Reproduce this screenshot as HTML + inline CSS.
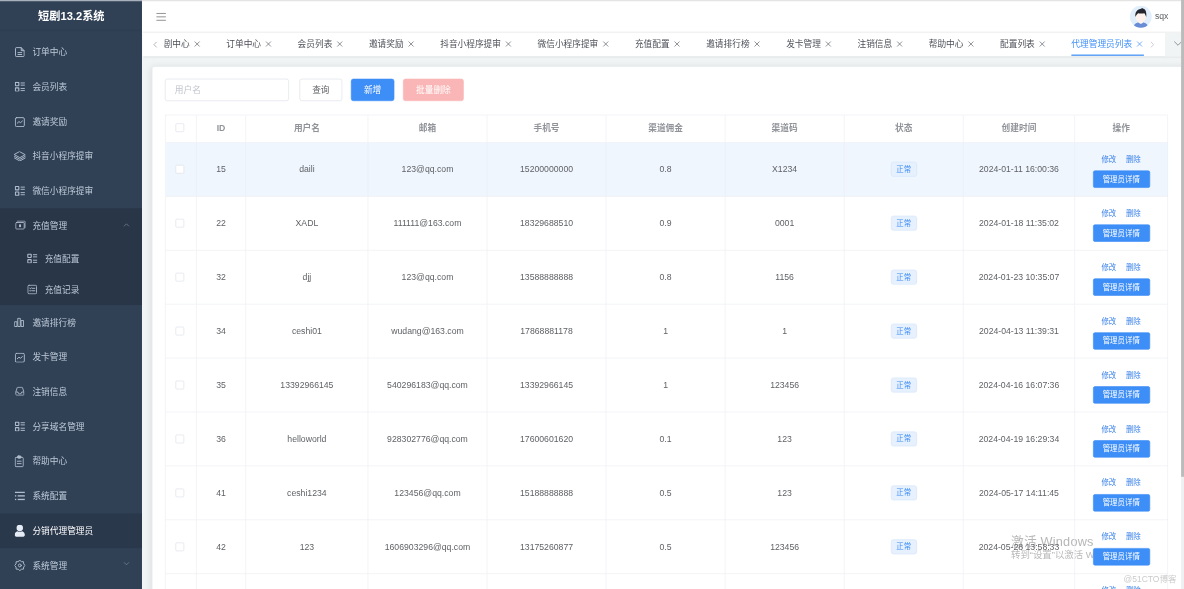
<!DOCTYPE html><html lang="zh-CN"><head><meta charset="utf-8"><title>短剧13.2系统</title><style>
*{box-sizing:border-box;margin:0;padding:0}
html,body{width:1184px;height:589px;overflow:hidden;background:#f1f4f5}
body{font-family:"Liberation Sans","Noto Sans CJK SC",sans-serif;font-size:14px;color:#606266;position:relative}
#root{position:absolute;left:0;top:0;width:1930px;height:970px;transform:scale(0.62);transform-origin:0 0;overflow:hidden;background:#f1f4f5;filter:blur(0.5px)}
.abs{position:absolute}
#side{position:absolute;left:0;top:0;overflow:hidden;width:229.3px;height:970px;background:#304156}
#title{position:absolute;left:0;top:1.5px;width:230px;height:50px;line-height:50px;text-align:center;color:#fff;font-size:18px;font-weight:bold;white-space:nowrap}
.mi{position:absolute;left:0;width:230px;height:56px;color:#bfcbd9;font-size:14px;white-space:nowrap}
.mi.sub{height:50px}
.mi .ic{position:absolute;top:50%;transform:translate(-50%,-50%);display:block;line-height:0;color:#b1bdcd}
.mi .tx{position:absolute;top:-1px;height:100%;display:flex;align-items:center}
.mi.act{background:#2a384c;color:#fff}
.mi.act .ic{color:#e6ecf5}
.arrow{position:absolute;left:198px;top:50%;width:12px;height:12px;transform:translateY(-50%);color:#7d8b9e}
#dark{position:absolute;left:0;top:336px;width:230px;height:156px;background:#293648}
#hdr{position:absolute;left:230px;top:0;width:1700px;height:52.800px;background:#fff;border-bottom:2.500px solid #f0f0f0}
#tabs{position:absolute;left:230px;top:52px;width:1700px;height:39px;background:#fff;box-shadow:0 1px 3px rgba(0,0,0,.14)}
#tabclip{position:absolute;left:35px;top:0;width:1582px;height:39px;overflow:hidden}
#tabrow{position:absolute;right:2px;top:0;height:39px;display:flex;white-space:nowrap}
.tab{height:37.7px;line-height:37.7px;padding:0 20px;font-size:14px;color:#4b4f57;display:flex;align-items:center;position:relative}
.tab:last-child{padding-right:0}
.tab .x{display:inline-block;width:14px;height:14px;margin-left:5px;position:relative;top:0px}
.tab.on{color:#3e8ef7}
.tab.on:after{content:"";position:absolute;left:20px;right:0;bottom:-0.5px;height:2px;background:#3e8ef7}
#more{position:absolute;left:1649px;top:0;width:41px;height:39px;background:#f1f4f5}
#card{position:absolute;left:245px;top:106.5px;width:1680px;height:900px;background:#fff;border:1px solid #ebeef5;border-radius:4px;box-shadow:0 2px 12px 0 rgba(0,0,0,.1)}
.inp{position:absolute;left:266px;top:127px;width:200px;height:36px;border:1px solid #dcdfe6;border-radius:4px;background:#fff;color:#c0c4cc;font-size:14px;line-height:34px;padding-left:15px}
.btn{position:absolute;top:127px;height:36px;border-radius:4px;font-size:14px;line-height:34px;text-align:center;border:1px solid #dcdfe6;background:#fff;color:#606266;white-space:nowrap}
.btn.pri{background:#3e8ef7;border-color:#3e8ef7;color:#fff}
.btn.dan{background:#fab6b6;border-color:#fab6b6;color:#fff}
#tbl{position:absolute;left:266px;top:185px;width:1618px;border-left:1px solid #ecedf1;border-top:1px solid #ecedf1}
.tr{display:flex;position:relative}
.tr.h{height:44px}
.tr.b{height:87px}
.tr.hi{background:#eff6fe}
.td{height:100%;border-right:1px solid #ecedf1;border-bottom:1px solid #ecedf1;display:flex;align-items:center;justify-content:center;font-size:14px;color:#606266;white-space:nowrap;position:relative;flex:none}
.tr.h .td{color:#909399;font-weight:bold;padding-bottom:4px}
.tr.h .cb{margin-top:-8.200px}
.cb{position:absolute;left:16px;top:50%;margin-top:-7px;width:14px;height:14px;border:1px solid #dcdfe6;border-radius:2px;background:#fff}
.tag{display:block;width:42px;height:24px;line-height:22px;font-size:12px;color:#3e8ef7;background:#e7f1fd;border:1px solid #d3e5fb;border-radius:4px;text-align:center}
.lk{position:absolute;top:15px;height:24px;line-height:24px;font-size:12px;color:#3a82e8}
.mb{position:absolute;left:28.5px;top:45px;width:92px;height:28px;line-height:27.5px;border:1px solid #3e8ef7;background:#3e8ef7;color:#fff;font-size:12px;border-radius:3px;text-align:center}
#sb{position:absolute;left:1905px;top:0;width:26px;height:970px;background:#eef0f2}
#sbt{position:absolute;left:0;top:-5px;width:26px;height:774px;background:#bbb}
#topline{position:absolute;left:0;top:-3px;width:1930px;height:5px;background:linear-gradient(to right,#a8b0bc 0,#a8b0bc 229.3px,#e4e4e4 229.3px)}
.wm1{position:absolute;left:1630.6px;top:860px;font-size:20.5px;line-height:26px;color:#b6b6b6;white-space:nowrap;letter-spacing:.35px}
.wm2{position:absolute;left:1630.6px;top:884.5px;font-size:15.2px;line-height:20px;color:#b9b9b9;white-space:nowrap}
.wm3{position:absolute;left:1812px;top:923px;font-size:14px;line-height:18px;color:#cfcfcf;white-space:nowrap}
</style></head><body><div id="root">
<div class="abs" style="left:228px;top:0;width:4px;height:91px;background:#fff"></div>
<div id="card"></div>
<div class="inp">用户名</div>
<div class="btn" style="left:483px;width:69px">查询</div>
<div class="btn pri" style="left:566px;width:70px">新增</div>
<div class="btn dan" style="left:650px;width:98px">批量删除</div>
<div class="wm1">激活 Windows</div><div class="wm2">转到“设置”以激活 Windows。</div>
<div id="tbl">
<div class="tr h">
<div class="td" style="width:50px"><span class="cb"></span></div>
<div class="td" style="width:80px;padding-bottom:2.500px">ID</div>
<div class="td" style="width:197px">用户名</div>
<div class="td" style="width:192px">邮箱</div>
<div class="td" style="width:192px">手机号</div>
<div class="td" style="width:192px">渠道佣金</div>
<div class="td" style="width:192px">渠道码</div>
<div class="td" style="width:192px">状态</div>
<div class="td" style="width:180px">创建时间</div>
<div class="td" style="width:150px">操作</div>
</div>
<div class="tr b hi">
<div class="td" style="width:50px"><span class="cb"></span></div>
<div class="td" style="width:80px">15</div>
<div class="td" style="width:197px">daili</div>
<div class="td" style="width:192px">123@qq.com</div>
<div class="td" style="width:192px">15200000000</div>
<div class="td" style="width:192px">0.8</div>
<div class="td" style="width:192px">X1234</div>
<div class="td" style="width:192px"><span class="tag">正常</span></div>
<div class="td" style="width:180px">2024-01-11 16:00:36</div>
<div class="td" style="width:150px"><span class="lk" style="left:42.5px">修改</span><span class="lk" style="left:82px">删除</span><span class="mb">管理员详情</span></div>
</div>
<div class="tr b">
<div class="td" style="width:50px"><span class="cb"></span></div>
<div class="td" style="width:80px">22</div>
<div class="td" style="width:197px">XADL</div>
<div class="td" style="width:192px">111111@163.com</div>
<div class="td" style="width:192px">18329688510</div>
<div class="td" style="width:192px">0.9</div>
<div class="td" style="width:192px">0001</div>
<div class="td" style="width:192px"><span class="tag">正常</span></div>
<div class="td" style="width:180px">2024-01-18 11:35:02</div>
<div class="td" style="width:150px"><span class="lk" style="left:42.5px">修改</span><span class="lk" style="left:82px">删除</span><span class="mb">管理员详情</span></div>
</div>
<div class="tr b">
<div class="td" style="width:50px"><span class="cb"></span></div>
<div class="td" style="width:80px">32</div>
<div class="td" style="width:197px">djj</div>
<div class="td" style="width:192px">123@qq.com</div>
<div class="td" style="width:192px">13588888888</div>
<div class="td" style="width:192px">0.8</div>
<div class="td" style="width:192px">1156</div>
<div class="td" style="width:192px"><span class="tag">正常</span></div>
<div class="td" style="width:180px">2024-01-23 10:35:07</div>
<div class="td" style="width:150px"><span class="lk" style="left:42.5px">修改</span><span class="lk" style="left:82px">删除</span><span class="mb">管理员详情</span></div>
</div>
<div class="tr b">
<div class="td" style="width:50px"><span class="cb"></span></div>
<div class="td" style="width:80px">34</div>
<div class="td" style="width:197px">ceshi01</div>
<div class="td" style="width:192px">wudang@163.com</div>
<div class="td" style="width:192px">17868881178</div>
<div class="td" style="width:192px">1</div>
<div class="td" style="width:192px">1</div>
<div class="td" style="width:192px"><span class="tag">正常</span></div>
<div class="td" style="width:180px">2024-04-13 11:39:31</div>
<div class="td" style="width:150px"><span class="lk" style="left:42.5px">修改</span><span class="lk" style="left:82px">删除</span><span class="mb">管理员详情</span></div>
</div>
<div class="tr b">
<div class="td" style="width:50px"><span class="cb"></span></div>
<div class="td" style="width:80px">35</div>
<div class="td" style="width:197px">13392966145</div>
<div class="td" style="width:192px">540296183@qq.com</div>
<div class="td" style="width:192px">13392966145</div>
<div class="td" style="width:192px">1</div>
<div class="td" style="width:192px">123456</div>
<div class="td" style="width:192px"><span class="tag">正常</span></div>
<div class="td" style="width:180px">2024-04-16 16:07:36</div>
<div class="td" style="width:150px"><span class="lk" style="left:42.5px">修改</span><span class="lk" style="left:82px">删除</span><span class="mb">管理员详情</span></div>
</div>
<div class="tr b">
<div class="td" style="width:50px"><span class="cb"></span></div>
<div class="td" style="width:80px">36</div>
<div class="td" style="width:197px">helloworld</div>
<div class="td" style="width:192px">928302776@qq.com</div>
<div class="td" style="width:192px">17600601620</div>
<div class="td" style="width:192px">0.1</div>
<div class="td" style="width:192px">123</div>
<div class="td" style="width:192px"><span class="tag">正常</span></div>
<div class="td" style="width:180px">2024-04-19 16:29:34</div>
<div class="td" style="width:150px"><span class="lk" style="left:42.5px">修改</span><span class="lk" style="left:82px">删除</span><span class="mb">管理员详情</span></div>
</div>
<div class="tr b">
<div class="td" style="width:50px"><span class="cb"></span></div>
<div class="td" style="width:80px">41</div>
<div class="td" style="width:197px">ceshi1234</div>
<div class="td" style="width:192px">123456@qq.com</div>
<div class="td" style="width:192px">15188888888</div>
<div class="td" style="width:192px">0.5</div>
<div class="td" style="width:192px">123</div>
<div class="td" style="width:192px"><span class="tag">正常</span></div>
<div class="td" style="width:180px">2024-05-17 14:11:45</div>
<div class="td" style="width:150px"><span class="lk" style="left:42.5px">修改</span><span class="lk" style="left:82px">删除</span><span class="mb">管理员详情</span></div>
</div>
<div class="tr b">
<div class="td" style="width:50px"><span class="cb"></span></div>
<div class="td" style="width:80px">42</div>
<div class="td" style="width:197px">123</div>
<div class="td" style="width:192px">1606903296@qq.com</div>
<div class="td" style="width:192px">13175260877</div>
<div class="td" style="width:192px">0.5</div>
<div class="td" style="width:192px">123456</div>
<div class="td" style="width:192px"><span class="tag">正常</span></div>
<div class="td" style="width:180px">2024-05-28 13:58:33</div>
<div class="td" style="width:150px"><span class="lk" style="left:42.5px">修改</span><span class="lk" style="left:82px">删除</span><span class="mb">管理员详情</span></div>
</div>
<div class="tr b">
<div class="td" style="width:50px"><span class="cb"></span></div>
<div class="td" style="width:80px"></div>
<div class="td" style="width:197px"></div>
<div class="td" style="width:192px"></div>
<div class="td" style="width:192px"></div>
<div class="td" style="width:192px"></div>
<div class="td" style="width:192px"></div>
<div class="td" style="width:192px"><span class="tag">正常</span></div>
<div class="td" style="width:180px"></div>
<div class="td" style="width:150px"><span class="lk" style="left:42.5px">修改</span><span class="lk" style="left:82px">删除</span><span class="mb">管理员详情</span></div>
</div>
</div>
<div id="tabs"><svg class="abs" style="left:15px;top:14px" width="12" height="12" viewBox="0 0 12 12" fill="none" stroke="#909399" stroke-width="1.1"><path d="M7.600 1.600L3.400 6l4.200 4.400"/></svg>
<div id="tabclip"><div id="tabrow">
<div class="tab"><span>短剧中心</span><svg class="x" viewBox="0 0 14 14" fill="none" stroke="#5a5e66" stroke-width="1.1"><path d="M3 3l8 8M11 3l-8 8"/></svg></div>
<div class="tab"><span>订单中心</span><svg class="x" viewBox="0 0 14 14" fill="none" stroke="#5a5e66" stroke-width="1.1"><path d="M3 3l8 8M11 3l-8 8"/></svg></div>
<div class="tab"><span>会员列表</span><svg class="x" viewBox="0 0 14 14" fill="none" stroke="#5a5e66" stroke-width="1.1"><path d="M3 3l8 8M11 3l-8 8"/></svg></div>
<div class="tab"><span>邀请奖励</span><svg class="x" viewBox="0 0 14 14" fill="none" stroke="#5a5e66" stroke-width="1.1"><path d="M3 3l8 8M11 3l-8 8"/></svg></div>
<div class="tab"><span>抖音小程序提审</span><svg class="x" viewBox="0 0 14 14" fill="none" stroke="#5a5e66" stroke-width="1.1"><path d="M3 3l8 8M11 3l-8 8"/></svg></div>
<div class="tab"><span>微信小程序提审</span><svg class="x" viewBox="0 0 14 14" fill="none" stroke="#5a5e66" stroke-width="1.1"><path d="M3 3l8 8M11 3l-8 8"/></svg></div>
<div class="tab"><span>充值配置</span><svg class="x" viewBox="0 0 14 14" fill="none" stroke="#5a5e66" stroke-width="1.1"><path d="M3 3l8 8M11 3l-8 8"/></svg></div>
<div class="tab"><span>邀请排行榜</span><svg class="x" viewBox="0 0 14 14" fill="none" stroke="#5a5e66" stroke-width="1.1"><path d="M3 3l8 8M11 3l-8 8"/></svg></div>
<div class="tab"><span>发卡管理</span><svg class="x" viewBox="0 0 14 14" fill="none" stroke="#5a5e66" stroke-width="1.1"><path d="M3 3l8 8M11 3l-8 8"/></svg></div>
<div class="tab"><span>注销信息</span><svg class="x" viewBox="0 0 14 14" fill="none" stroke="#5a5e66" stroke-width="1.1"><path d="M3 3l8 8M11 3l-8 8"/></svg></div>
<div class="tab"><span>帮助中心</span><svg class="x" viewBox="0 0 14 14" fill="none" stroke="#5a5e66" stroke-width="1.1"><path d="M3 3l8 8M11 3l-8 8"/></svg></div>
<div class="tab"><span>配置列表</span><svg class="x" viewBox="0 0 14 14" fill="none" stroke="#5a5e66" stroke-width="1.1"><path d="M3 3l8 8M11 3l-8 8"/></svg></div>
<div class="tab on"><span>代理管理员列表</span><svg class="x" viewBox="0 0 14 14" fill="none" stroke="#3e8ef7" stroke-width="1.1"><path d="M3 3l8 8M11 3l-8 8"/></svg></div>
</div></div>
<svg class="abs" style="left:1622px;top:14px" width="12" height="12" viewBox="0 0 12 12" fill="none" stroke="#b4b7bd" stroke-width="1.1"><path d="M4.400 1.600L8.600 6 4.400 10.400"/></svg>
<div id="more"><svg class="abs" style="left:12.5px;top:10px" width="16" height="16" viewBox="0 0 16 16" fill="none" stroke="#7a7d84" stroke-width="1.300"><path d="M2 5l6 6 6-6"/></svg></div>
</div>
<div id="hdr">
<svg class="abs" style="left:21.500px;top:19px" width="16" height="16" viewBox="0 0 16 16" fill="#9a9a9a"><rect x="0" y="1.900" width="15.500" height="1.700"/><rect x="0" y="7.300" width="15.500" height="1.700"/><rect x="0" y="12.900" width="15.500" height="1.700"/></svg>
<svg class="abs" style="left:1591.800px;top:9.300px" width="36" height="36" viewBox="0 0 36 36"><defs><clipPath id="av"><circle cx="18" cy="18" r="17.600"/></clipPath></defs><circle cx="18" cy="18" r="17.600" fill="#e1effd"/><g clip-path="url(#av)"><path d="M6.500 33.500C7.500 29 11.500 27 18 27s10.500 2 11.500 6.500V37h-23z" fill="#688dd6"/><path d="M14.500 23h7v4.500l-3.500 2.200-3.500-2.200z" fill="#fdf6f2"/><ellipse cx="18" cy="18.600" rx="8.300" ry="8.600" fill="#fdf2ed"/><path d="M9.400 18.500C8.200 11 12 6.200 17.500 5.600c1.200-1.300 3.600-1.500 4.600-.3 3.600 1 5.600 5.400 4.700 13.200-.9-2.600-1.800-4.800-3-6.200-3 .9-7.600.8-10.200 0-1.600 1.400-3 3.300-4.200 6.200z" fill="#23262e"/></g></svg>
<div class="abs" style="left:1632.800px;top:0;height:52px;line-height:52px;font-size:14px;color:#606266">sqx</div>
</div>
<div id="side"><div id="dark"></div><div style="position:absolute;left:0;top:47.500px;width:230px;height:3.500px;background:rgba(0,0,0,.035)"></div><div id="title">短剧13.2系统</div>
<div class="mi" style="top:56.0px"><span class="ic" style="left:32px;margin-top:0.3px"><svg viewBox="0 0 16 16" width="16" height="16.500" preserveAspectRatio="none" stroke="currentColor" fill="none" stroke-width="1.5" stroke-linecap="round" stroke-linejoin="round"><path d="M1 2.200A1.200 1.200 0 0 1 2.200 1h8l4.800 4.800v8A1.200 1.200 0 0 1 13.800 15H2.200A1.200 1.200 0 0 1 1 13.800z"/><path d="M10.200 1.200v4.600h4.600" fill="currentColor" fill-opacity=".5"/><path d="M5 8.800h6M5 11.800h6"/></svg></span><span class="tx" style="left:52.3px">订单中心</span></div>
<div class="mi" style="top:112.0px"><span class="ic" style="left:32px;margin-top:-0.3px"><svg viewBox="0 0 16 16" width="16.500" height="16.500" stroke="currentColor" fill="none" stroke-width="1.5" stroke-linecap="round" stroke-linejoin="round"><rect x="1" y="1" width="5.400" height="5.400" rx=".8" stroke-width="1.800"/><rect x="1" y="9.600" width="5.400" height="5.400" rx=".8" stroke-width="1.800"/><path d="M9.800 2h5.400M9.800 5.400h5.400M9.800 10.600h5.400M9.800 14h5.400"/></svg></span><span class="tx" style="left:52.3px">会员列表</span></div>
<div class="mi" style="top:168.0px"><span class="ic" style="left:32.3px;margin-top:0.7px"><svg viewBox="0 0 16 16" width="16.500" height="16.500" stroke="currentColor" fill="none" stroke-width="1.5" stroke-linecap="round" stroke-linejoin="round"><rect x="1" y="1" width="14" height="14" rx="2"/><path d="M4 9.600l2.600-2.400 2.600 1.600L12 6.200"/></svg></span><span class="tx" style="left:52.3px">邀请奖励</span></div>
<div class="mi" style="top:224.0px"><span class="ic" style="left:31.5px;margin-top:-0.2px"><svg viewBox="0 0 20 16" width="20" height="16.500" preserveAspectRatio="none" stroke="currentColor" fill="none" stroke-width="1.5" stroke-linecap="round" stroke-linejoin="round"><path d="M10 1l8.600 4.600L10 10.200 1.400 5.600z"/><path d="M1.400 8.200l8.600 4.600 8.600-4.600"/><path d="M1.400 10.800l8.600 4.600 8.600-4.600"/></svg></span><span class="tx" style="left:52.3px">抖音小程序提审</span></div>
<div class="mi" style="top:280.0px"><span class="ic" style="left:32px;margin-top:-0.3px"><svg viewBox="0 0 16 16" width="16.500" height="16.500" stroke="currentColor" fill="none" stroke-width="1.5" stroke-linecap="round" stroke-linejoin="round"><rect x="1" y="1" width="5.400" height="5.400" rx=".8" stroke-width="1.800"/><rect x="1" y="9.600" width="5.400" height="5.400" rx=".8" stroke-width="1.800"/><path d="M9.800 2h5.400M9.800 5.400h5.400M9.800 10.600h5.400M9.800 14h5.400"/></svg></span><span class="tx" style="left:52.3px">微信小程序提审</span></div>
<div class="mi" style="top:336.0px"><span class="ic" style="left:32.9px;margin-top:-0.7px"><svg viewBox="0 0 18 15" width="17" height="15" preserveAspectRatio="none" stroke="currentColor" fill="none" stroke-width="1.5" stroke-linecap="round" stroke-linejoin="round"><rect x="1" y="3.400" width="14.400" height="10.600" rx="1.400"/><path d="M3.600 1h12.400a1 1 0 0 1 1 1v9.400"/><rect x="6.600" y="6.400" width="3.400" height="4.400" fill="currentColor" stroke="none"/></svg></span><span class="tx" style="left:52.3px">充值管理</span><svg class="arrow" style="margin-top:-1px" viewBox="0 0 12 12" fill="none" stroke="currentColor" stroke-width="1.100"><path d="M2 8l4-4 4 4"/></svg></div>
<div class="mi sub" style="top:392.0px"><span class="ic" style="left:52px;margin-top:-0.3px"><svg viewBox="0 0 16 16" width="16.500" height="16.500" stroke="currentColor" fill="none" stroke-width="1.5" stroke-linecap="round" stroke-linejoin="round"><rect x="1" y="1" width="5.400" height="5.400" rx=".8" stroke-width="1.800"/><rect x="1" y="9.600" width="5.400" height="5.400" rx=".8" stroke-width="1.800"/><path d="M9.800 2h5.400M9.800 5.400h5.400M9.800 10.600h5.400M9.800 14h5.400"/></svg></span><span class="tx" style="left:72px">充值配置</span></div>
<div class="mi sub" style="top:442.0px"><span class="ic" style="left:51.8px;margin-top:0px"><svg viewBox="0 0 16 16" width="16" height="16" stroke="currentColor" fill="none" stroke-width="1.5" stroke-linecap="round" stroke-linejoin="round"><rect x="1" y="1" width="14" height="14" rx="2"/><path d="M7.600 6h4.600M7.600 10h4.600M4 6l.8.800 1.400-1.600M4 10l.8.800 1.400-1.600"/></svg></span><span class="tx" style="left:72px">充值记录</span></div>
<div class="mi" style="top:492.0px"><span class="ic" style="left:31.1px;margin-top:0.3px"><svg viewBox="0 0 16 16" width="16" height="16" stroke="currentColor" fill="none" stroke-width="1.5" stroke-linecap="round" stroke-linejoin="round"><rect x="1" y="7" width="3.400" height="7.600"/><rect x="6.300" y="1.400" width="3.400" height="13.200"/><rect x="11.600" y="5" width="3.400" height="9.600"/></svg></span><span class="tx" style="left:52.3px">邀请排行榜</span></div>
<div class="mi" style="top:548.0px"><span class="ic" style="left:32.3px;margin-top:0.7px"><svg viewBox="0 0 16 16" width="16.500" height="16.500" stroke="currentColor" fill="none" stroke-width="1.5" stroke-linecap="round" stroke-linejoin="round"><rect x="1" y="1" width="14" height="14" rx="2"/><path d="M4 9.600l2.600-2.400 2.600 1.600L12 6.200"/></svg></span><span class="tx" style="left:52.3px">发卡管理</span></div>
<div class="mi" style="top:604.0px"><span class="ic" style="left:31.8px;margin-top:-0.9px"><svg viewBox="0 0 16 16" width="15" height="15" stroke="currentColor" fill="none" stroke-width="1.5" stroke-linecap="round" stroke-linejoin="round"><path d="M1 9.200L3.400 2a1 1 0 0 1 1-.8h7.200a1 1 0 0 1 1 .8L15 9.200v4.600a1 1 0 0 1-1 1H2a1 1 0 0 1-1-1z"/><path d="M1.400 9.400h3.400a3.200 3.200 0 0 0 6.400 0h3.400"/></svg></span><span class="tx" style="left:52.3px">注销信息</span></div>
<div class="mi" style="top:660.0px"><span class="ic" style="left:32px;margin-top:-0.3px"><svg viewBox="0 0 16 16" width="16.500" height="16.500" stroke="currentColor" fill="none" stroke-width="1.5" stroke-linecap="round" stroke-linejoin="round"><rect x="1" y="1" width="5.400" height="5.400" rx=".8" stroke-width="1.800"/><rect x="1" y="9.600" width="5.400" height="5.400" rx=".8" stroke-width="1.800"/><path d="M9.800 2h5.400M9.800 5.400h5.400M9.800 10.600h5.400M9.800 14h5.400"/></svg></span><span class="tx" style="left:52.3px">分享域名管理</span></div>
<div class="mi" style="top:716.0px"><span class="ic" style="left:31.3px;margin-top:0px"><svg viewBox="0 0 15 19" width="15" height="19.500" preserveAspectRatio="none" stroke="currentColor" fill="none" stroke-width="1.5" stroke-linecap="round" stroke-linejoin="round"><path d="M4.200 3.400H2.400A1.400 1.400 0 0 0 1 4.800v11.800A1.400 1.400 0 0 0 2.400 18h10.200a1.400 1.400 0 0 0 1.400-1.400V4.800a1.400 1.400 0 0 0-1.400-1.400h-1.800"/><rect x="4.600" y="1" width="5.800" height="3.600" rx="1.400" fill="currentColor"/><path d="M4.400 9.400h6.200M4.400 13.200h6.200"/></svg></span><span class="tx" style="left:52.3px">帮助中心</span></div>
<div class="mi" style="top:772.0px"><span class="ic" style="left:32px;margin-top:0px"><svg viewBox="0 0 17 15" width="17" height="15" fill="currentColor"><rect x="0.500" y="0.500" width="16" height="2.200"/><rect x="0.500" y="6.200" width="2.200" height="2.200"/><rect x="5" y="6.200" width="11.500" height="2.200"/><rect x="0.500" y="12" width="2.200" height="2.200"/><rect x="5" y="12" width="11.500" height="2.200"/></svg></span><span class="tx" style="left:52.3px">系统配置</span></div>
<div class="mi act" style="top:828.0px"><span class="ic" style="left:32.2px;margin-top:0px"><svg viewBox="0.2 0 15 17.600" width="17" height="19.500" preserveAspectRatio="none" fill="currentColor"><circle cx="7.600" cy="4.800" r="4.600"/><path d="M0.400 15.200c0-3.600 1.800-5.400 4-5.800 1 .6 2 .9 3.200.9s2.200-.3 3.200-.9c2.200.4 4 2.200 4 5.800 0 1.400-.8 2.200-2.200 2.200H2.600c-1.400 0-2.200-.8-2.200-2.200z"/></svg></span><span class="tx" style="left:52.3px">分销代理管理员</span></div>
<div class="mi" style="top:884.0px"><span class="ic" style="left:32.2px;margin-top:0px"><svg viewBox="0 0 18 18" width="17.600" height="17.600" stroke="currentColor" fill="none" stroke-width="1.5" stroke-linecap="round" stroke-linejoin="round"><path d="M9.00 0.40 L11.60 2.72 L15.08 2.92 L15.28 6.40 L17.60 9.00 L15.28 11.60 L15.08 15.08 L11.60 15.28 L9.00 17.60 L6.40 15.28 L2.92 15.08 L2.72 11.60 L0.40 9.00 L2.72 6.40 L2.92 2.92 L6.40 2.72z" stroke-width="1.600"/><circle cx="9" cy="9" r="2.400"/></svg></span><span class="tx" style="left:52.3px">系统管理</span><svg class="arrow" style="margin-top:-2.6px" viewBox="0 0 12 12" fill="none" stroke="currentColor" stroke-width="1.100"><path d="M2 4l4 4 4-4"/></svg></div>
</div>
<div id="topline"></div>
<div id="sb"><div id="sbt"></div></div>
</div>
<div style="position:absolute;left:1123.600px;top:571.800px;font-size:8.500px;line-height:14px;color:#cbcbcb;filter:blur(0.3px);white-space:nowrap">@51CTO博客</div>
</body></html>
